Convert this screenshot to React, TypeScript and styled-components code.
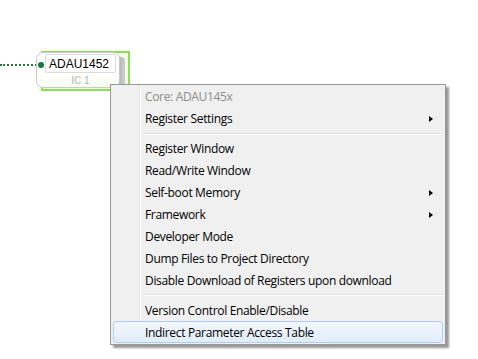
import React from "react";
import styled, { createGlobalStyle } from "styled-components";

const Global = createGlobalStyle`
  html, body { margin: 0; padding: 0; background: #fff; }
  body { width: 478px; height: 359px; overflow: hidden; font-family: "Open Sans", "Noto Sans", sans-serif; }
`;

const Canvas = styled.div`
  position: relative;
  width: 478px;
  height: 359px;
  background: #fff;
  overflow: hidden;
`;

const Wire = styled.div`
  position: absolute;
  left: 0;
  top: 64px;
  width: 40px;
  height: 0;
  border-top: 2px dotted #1f7a3a;
`;

const Pin = styled.div`
  position: absolute;
  left: 38px;
  top: 62px;
  width: 6px;
  height: 6px;
  border-radius: 50%;
  background: #0b7a3c;
`;

const Node = styled.div`
  position: absolute;
  left: 36px;
  top: 51px;
  width: 94px;
  height: 40px;
`;

const GreenFrame = styled.div`
  position: absolute;
  left: 5px;
  top: 0;
  right: 0;
  bottom: 0;
  border: 2px solid #8ae04e;
  background: #f3fbeb;
`;

const NodeShadow = styled.div`
  position: absolute;
  left: 80px;
  top: 6px;
  width: 9px;
  height: 32px;
  background: linear-gradient(to right, #a9a9a9, #cfcfcf);
  border-radius: 0 4px 4px 0;
`;

const Card = styled.div`
  position: absolute;
  left: 0;
  top: 1px;
  width: 84px;
  height: 36px;
  border: 1px solid #c9c9c9;
  border-radius: 7px;
  background: linear-gradient(to bottom, #ffffff 60%, #f6fcf0);
  display: flex;
  flex-direction: column;
  align-items: flex-start;
  padding: 1px 0 0 8px;
  box-sizing: border-box;
`;

const TitleBox = styled.div`
  width: 71px;
  height: 20px;
  border: 1px solid #dcdcdc;
  border-radius: 2px;
  box-sizing: border-box;
  display: flex;
  align-items: center;
  padding-left: 3px;
  background: #fff;
  font-family: "Liberation Sans", Arial, sans-serif;
  font-size: 12px;
  color: #000;
`;

const SubLabel = styled.div`
  width: 71px;
  text-align: center;
  font-family: "Liberation Sans", Arial, sans-serif;
  font-size: 10px;
  color: #b4b4b4;
  margin-top: 2px;
  line-height: 12px;
`;

const Menu = styled.div`
  position: absolute;
  left: 110px;
  top: 84px;
  width: 336px;
  height: 261px;
  box-sizing: border-box;
  border: 1px solid #979797;
  background: #f0f0f0;
  box-shadow: 3px 3px 2px rgba(0, 0, 0, 0.4);
  padding: 1px 2px;
  display: flex;
  flex-direction: column;
  font-family: "Open Sans", "Noto Sans", sans-serif;
  font-size: 12px;
  letter-spacing: -0.33px;
`;

const Gutter = styled.div`
  position: absolute;
  left: 28px;
  top: 0;
  bottom: 0;
  width: 1px;
  background: #e2e3e3;
  border-right: 1px solid #fff;
`;

const Item = styled.div<{ $disabled?: boolean; $active?: boolean }>`
  position: relative;
  height: 22px;
  box-sizing: border-box;
  display: flex;
  align-items: center;
  padding-left: 31px;
  color: ${(p) => (p.$disabled ? "#8d8d8d" : "#000")};
  border: 1px solid ${(p) => (p.$active ? "#aecff7" : "transparent")};
  border-radius: 3px;
  background: ${(p) =>
    p.$active ? "linear-gradient(to bottom, #f2f7fd, #e1ecfa)" : "transparent"};
  white-space: nowrap;
`;

const Arrow = styled.span`
  position: absolute;
  right: 9px;
  top: 7px;
  width: 0;
  height: 0;
  border-top: 3.5px solid transparent;
  border-bottom: 3.5px solid transparent;
  border-left: 4px solid #000;
`;

const Separator = styled.div`
  height: 8px;
  display: flex;
  align-items: center;
  padding-left: 30px;
  &::after {
    content: "";
    flex: 1;
    height: 1px;
    background: #e0e0e0;
    border-bottom: 1px solid #fff;
  }
`;

type Entry = { label?: string; sub?: boolean; disabled?: boolean; active?: boolean; sep?: boolean };

const entries: Entry[] = [
  { label: "Core: ADAU145x", disabled: true },
  { label: "Register Settings", sub: true },
  { sep: true },
  { label: "Register Window" },
  { label: "Read/Write Window" },
  { label: "Self-boot Memory", sub: true },
  { label: "Framework", sub: true },
  { label: "Developer Mode" },
  { label: "Dump Files to Project Directory" },
  { label: "Disable Download of Registers upon download" },
  { sep: true },
  { label: "Version Control Enable/Disable" },
  { label: "Indirect Parameter Access Table", active: true },
];

export default function App() {
  return (
    <Canvas>
      <Global />
      <Wire />
      <Node>
        <GreenFrame />
        <NodeShadow />
        <Card>
          <TitleBox>ADAU1452</TitleBox>
          <SubLabel>IC 1</SubLabel>
        </Card>
      </Node>
      <Pin />
      <Menu>
        <Gutter />
        {entries.map((e, i) =>
          e.sep ? (
            <Separator key={i} />
          ) : (
            <Item key={i} $disabled={e.disabled} $active={e.active}>
              {e.label}
              {e.sub && <Arrow />}
            </Item>
          )
        )}
      </Menu>
    </Canvas>
  );
}
